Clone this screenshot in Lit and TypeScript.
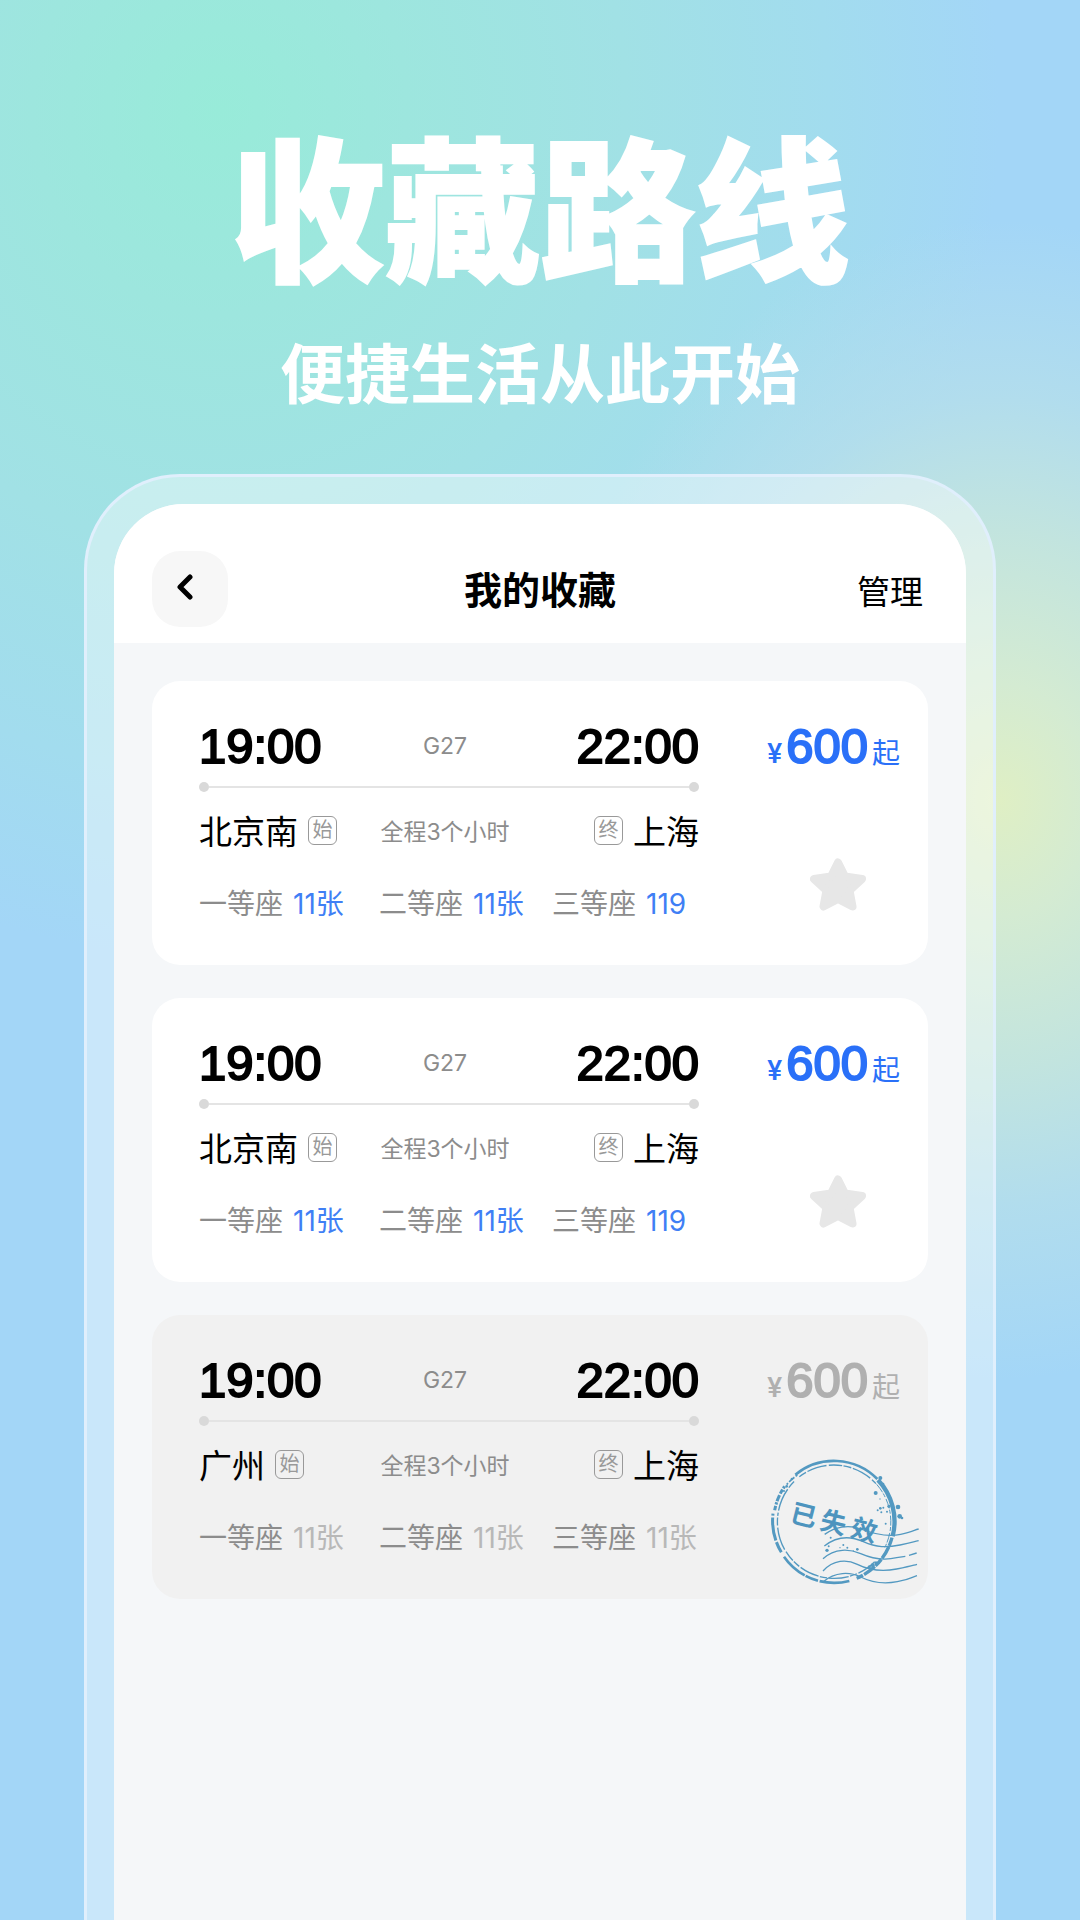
import { LitElement, html, svg, css, nothing } from "lit";
import { customElement, property } from "lit/decorators.js";
import { classMap } from "lit/directives/class-map.js";

interface Seat {
  name: string;
  left: string;
}

interface Trip {
  depart: string;
  arrive: string;
  train: string;
  from: string;
  to: string;
  duration: string;
  price: string;
  seats: Seat[];
  expired: boolean;
}

const openSeats: Seat[] = [
  { name: "一等座", left: "11张" },
  { name: "二等座", left: "11张" },
  { name: "三等座", left: "119" },
];

const base = {
  depart: "19:00",
  arrive: "22:00",
  train: "G27",
  to: "上海",
  duration: "全程3个小时",
  price: "600",
};

const trips: Trip[] = [
  { ...base, from: "北京南", seats: openSeats, expired: false },
  { ...base, from: "北京南", seats: openSeats, expired: false },
  {
    ...base,
    from: "广州",
    seats: openSeats.map((s) => ({ ...s, left: "11张" })),
    expired: true,
  },
];

const waves = [
  "M254 312C285 290 325 282 362 296S440 322 482 312S520 300 536 296",
  "M253 347C290 318 330 316 370 334S440 352 480 344S520 334 536 331",
  "M249 385C285 352 330 356 362 370S430 392 470 382L496 378M507 375L530 368",
  "M249 422C280 388 320 386 352 402S420 426 470 416S515 406 531 402",
  "M250 454C285 424 330 424 362 440S430 462 472 454S515 440 531 436",
];

const specks: [number, number, number][] = [
  [421, 143, 6], [407, 188, 6], [474, 230, 7], [479, 258, 7], [486, 263, 4],
  [430, 160, 3], [438, 176, 3], [420, 206, 2], [413, 240, 3], [421, 234, 4],
  [430, 232, 3], [441, 244, 3], [424, 246, 3], [447, 228, 5], [437, 280, 3],
  [452, 210, 4], [261, 360, 5], [266, 348, 3], [310, 344, 3], [322, 352, 3],
  [352, 357, 4], [340, 362, 2], [300, 352, 2], [272, 322, 3], [388, 410, 5],
  [398, 405, 6], [408, 398, 5], [140, 168, 4], [156, 146, 4], [132, 182, 3],
];

@customElement("expired-stamp")
export class ExpiredStamp extends LitElement {
  static styles = css`
    :host {
      display: block;
    }
    .art {
      display: block;
      width: 150px;
      height: 130px;
    }
    .ring,
    .wave {
      fill: none;
      stroke: #5399c1;
    }
    .wave {
      stroke-width: 4;
    }
    .label {
      fill: #4d94be;
      font: 700 78px "Noto Sans CJK SC", sans-serif;
      text-anchor: middle;
    }
    .speck {
      fill: #5399c1;
    }
  `;

  render() {
    return html`<svg class="art" viewBox="90 80 450 390" role="img" aria-label="已失效">
      <path class="ring" stroke-width="8" d="M166 133A183 183 0 0 1 412 146" />
      <path class="ring" stroke-width="13" d="M414 149A181 181 0 0 1 458 318" />
      <path class="ring" stroke-width="10" stroke-dasharray="26 3 40 4" d="M456 322A183 183 0 0 1 350 444" />
      <path class="ring" stroke-width="8" stroke-dasharray="90 5 40 3" d="M328 452A183 183 0 0 1 132 379" />
      <path class="ring" stroke-width="9" stroke-dasharray="34 5 70 6" d="M124 366A183 183 0 0 1 99 250" />
      <path class="ring" stroke-width="9" stroke-dasharray="14 4 7 3 20 5" d="M104 240A183 183 0 0 1 134 168" />
      <path class="ring" stroke-width="5" stroke-dasharray="6 5 11 4" d="M140 163A183 183 0 0 1 172 134" />
      <path class="ring" stroke-width="4" stroke-dasharray="24 5 60 7 40 4" d="M178 139A171 171 0 0 1 408 160" />
      <path class="ring" stroke-width="3" stroke-dasharray="30 4 12 6" d="M410 162A171 171 0 0 1 432 356" />
      <path class="ring" stroke-width="4" stroke-dasharray="60 5 22 4" d="M404 394A171 171 0 0 1 138 364" />
      <path class="ring" stroke-width="4" stroke-dasharray="70 6 24 5 10 6" d="M134 358A171 171 0 0 1 164 152" />
      ${waves.map((d) => svg`<path class="wave" d=${d} />`)}
      ${specks.map(([x, y, r]) => svg`<circle class="speck" cx=${x} cy=${y} r=${r} />`)}
      <g transform="rotate(14 281 277)">
        <text class="label" x="189 281 375" y="305">已失效</text>
      </g>
    </svg>`;
  }
}

@customElement("trip-card")
export class TripCard extends LitElement {
  @property({ attribute: false }) trip!: Trip;

  static styles = css`
    :host {
      display: block;
    }
    .card {
      position: relative;
      display: grid;
      grid-template-columns: minmax(0, 1fr) 137px;
      column-gap: 64px;
      padding: 36px 28px 43px 47px;
      border-radius: 28px;
      background: #fff;
      color: #000;
    }
    .card.expired {
      background: #f1f1f1;
    }
    .row {
      display: grid;
      grid-template-columns: 36% 132px minmax(0, 1fr);
      align-items: center;
      height: 40px;
    }
    .row.times {
      height: 58px;
    }
    .time,
    .amount {
      font-family: "Liberation Sans", Arial, sans-serif;
      font-size: 49px;
      -webkit-text-stroke: 2px currentColor;
    }
    .end {
      justify-self: end;
    }
    .mid {
      color: #8c8c8c;
      font-size: 23px;
      text-align: center;
      white-space: nowrap;
    }
    .track {
      display: flex;
      align-items: center;
      height: 10px;
      margin: 7px 0 14px;
    }
    .dot {
      width: 10px;
      height: 10px;
      border-radius: 50%;
      background: #d9d9d9;
    }
    .line {
      flex: 1;
      height: 2px;
      background: #e4e4e4;
    }
    .station {
      display: flex;
      align-items: center;
      gap: 10px;
      font-size: 33px;
    }
    .tag {
      box-sizing: border-box;
      width: 29px;
      height: 29px;
      border: 1px solid #999;
      border-radius: 6px;
      color: #999;
      font-size: 20px;
      line-height: 26px;
      text-align: center;
    }
    .seats {
      display: grid;
      grid-template-columns: 36% 34.6% minmax(0, 1fr);
      align-items: center;
      height: 40px;
      margin: 36px 0 0;
      padding: 0;
      list-style: none;
      color: #8c8c8c;
      font-size: 28px;
      white-space: nowrap;
    }
    .seat {
      display: flex;
      align-items: baseline;
      gap: 10px;
    }
    .left {
      color: #3f7ff5;
    }
    .expired .left {
      color: #b8b8b8;
    }
    .side {
      display: flex;
      flex-direction: column;
    }
    .price {
      display: flex;
      align-items: baseline;
      justify-content: flex-end;
      gap: 4px;
      height: 58px;
      line-height: 58px;
      color: #2a70f8;
      font-size: 28px;
      white-space: nowrap;
    }
    .expired .price {
      color: #b0b0b0;
    }
    .yen {
      font-family: Roboto, sans-serif;
      font-weight: 500;
    }
    .star {
      align-self: flex-end;
      width: 56px;
      height: 56px;
      margin: 82px 34px 0 0;
      padding: 0;
      border: 0;
      background: none;
      cursor: pointer;
    }
    .star-icon {
      display: block;
      width: 56px;
      height: 56px;
      fill: #e7e7e7;
      stroke: #e7e7e7;
      stroke-width: 8;
      stroke-linejoin: round;
    }
    .stamp {
      position: absolute;
      right: 8px;
      bottom: 12px;
    }
  `;

  render() {
    const t = this.trip;
    return html`<article class=${classMap({ card: true, expired: t.expired })}>
      <div>
        <div class="row times">
          <span class="time">${t.depart}</span>
          <span class="mid">${t.train}</span>
          <span class="time end">${t.arrive}</span>
        </div>
        <div class="track">
          <span class="dot"></span><span class="line"></span><span class="dot"></span>
        </div>
        <div class="row">
          <span class="station">${t.from}<span class="tag">始</span></span>
          <span class="mid">${t.duration}</span>
          <span class="station end"><span class="tag">终</span>${t.to}</span>
        </div>
        <ul class="seats">
          ${t.seats.map(
            (s) => html`<li class="seat"><span>${s.name}</span><span class="left">${s.left}</span></li>`
          )}
        </ul>
      </div>
      <div class="side">
        <div class="price">
          <span class="yen">¥</span><span class="amount">${t.price}</span><span>起</span>
        </div>
        ${t.expired
          ? nothing
          : html`<button class="star" aria-label="收藏">
              <svg class="star-icon" viewBox="0 0 56 56" aria-hidden="true">
                <path d="M28 5.500L35 19.500L52 22L39.500 33.500L42.500 49.500L28 42L13.500 49.500L16.500 33.500L4 22L21 19.500Z" />
              </svg>
            </button>`}
      </div>
      ${t.expired ? html`<expired-stamp class="stamp"></expired-stamp>` : nothing}
    </article>`;
  }
}

@customElement("app-root")
export class AppRoot extends LitElement {
  static styles = css`
    :host {
      display: block;
      font-family: Inter, "Noto Sans CJK SC", sans-serif;
    }
    .page {
      box-sizing: border-box;
      display: flex;
      flex-direction: column;
      min-height: 100vh;
      padding: 110px 84px 0;
      background:
        radial-gradient(ellipse 460px 580px at 1000px 800px, #dfefc4 0%, #d4ebd2 20%, rgba(196, 229, 221, 0.95) 46%, rgba(182, 223, 234, 0.75) 70%, rgba(166, 215, 246, 0) 100%),
        radial-gradient(ellipse 780px 850px at 220px 110px, #98ebd9 0%, #9de6de 24%, #a1e1e5 52%, #a2dcee 78%, rgba(163, 215, 247, 0) 100%),
        #a3d6f7;
    }
    .hero {
      display: flex;
      flex-direction: column;
      align-items: center;
      color: #fff;
      font-family: "Noto Sans CJK SC", sans-serif;
      white-space: nowrap;
    }
    .headline {
      margin: 0;
      font-size: 155px;
      font-weight: 900;
      line-height: 184px;
      -webkit-text-stroke: 2px #fff;
    }
    .tagline {
      margin: 28px 0 56px;
      font-size: 65px;
      font-weight: 600;
      line-height: 96px;
    }
    .phone {
      flex: 1;
      display: flex;
      flex-direction: column;
      padding: 27px 27px 0;
      border: 3px solid #e0effc;
      border-bottom: 0;
      border-radius: 96px 96px 0 0;
      background: rgba(255, 255, 255, 0.42);
    }
    .screen {
      flex: 1;
      overflow: hidden;
      border-radius: 70px 70px 0 0;
      background: #f5f7f9;
    }
    .bar {
      display: grid;
      grid-template-columns: 1fr auto 1fr;
      align-items: center;
      padding: 47px 38px 16px;
      background: #fff;
    }
    .back {
      display: flex;
      align-items: center;
      justify-content: center;
      width: 76px;
      height: 76px;
      padding: 0 10px 4px 0;
      border: 0;
      border-radius: 28px;
      background: #f7f7f7;
      cursor: pointer;
    }
    .chevron {
      width: 16px;
      height: 26px;
      fill: none;
      stroke: #000;
      stroke-width: 5;
      stroke-linecap: round;
      stroke-linejoin: round;
    }
    .title {
      margin: 0;
      padding-top: 2px;
      font-size: 38px;
      font-weight: 600;
      line-height: 56px;
    }
    .manage {
      justify-self: end;
      padding: 6px 5px 0 0;
      border: 0;
      background: none;
      color: #000;
      font-family: inherit;
      font-size: 33px;
      line-height: 56px;
      cursor: pointer;
    }
    .list {
      display: flex;
      flex-direction: column;
      gap: 33px;
      padding: 38px;
    }
  `;

  render() {
    return html`<div class="page">
      <header class="hero">
        <h1 class="headline">收藏路线</h1>
        <p class="tagline">便捷生活从此开始</p>
      </header>
      <section class="phone">
        <div class="screen">
          <nav class="bar">
            <button class="back" aria-label="返回">
              <svg class="chevron" viewBox="0 0 16 26" aria-hidden="true">
                <path d="M13 3L3 13L13 23" />
              </svg>
            </button>
            <h2 class="title">我的收藏</h2>
            <button class="manage">管理</button>
          </nav>
          <main class="list">
            ${trips.map((t) => html`<trip-card .trip=${t}></trip-card>`)}
          </main>
        </div>
      </section>
    </div>`;
  }
}
